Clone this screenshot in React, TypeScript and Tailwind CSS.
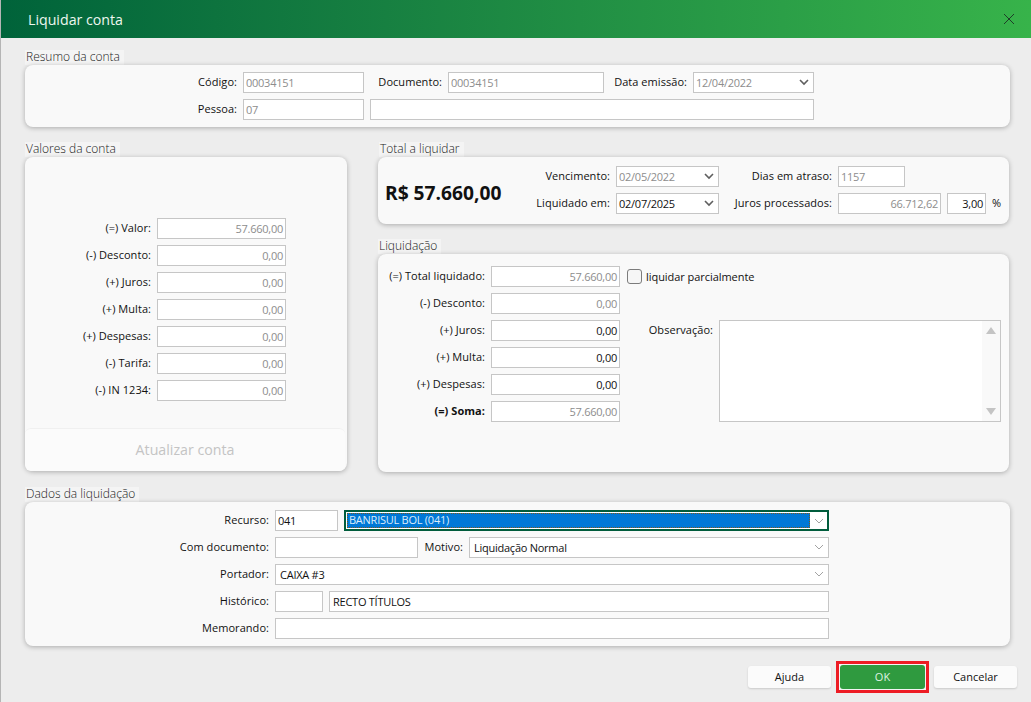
import type { ReactNode } from "react"

const ui = "font-['Open_Sans','Noto_Sans',sans-serif]"

const Chevron = ({ thin = false }: { thin?: boolean }) => (
  <svg width="12" height="8" viewBox="0 0 12 8" fill="none" className="shrink-0">
    {thin ? (
      <path d="M2 2 6 6 10 2" stroke="#a3a3a3" strokeWidth="1" />
    ) : (
      <path d="M2 2 6 6 10 2" stroke="#5f5f5f" strokeWidth="1.6" />
    )}
  </svg>
)

const Label = ({ children, className = "", bold = false }: { children: ReactNode; className?: string; bold?: boolean }) => (
  <div className={`shrink-0 pr-[6px] text-right text-[11px] leading-[20px] tracking-[0.05px] whitespace-nowrap text-[#111111] ${bold ? "font-bold" : "font-medium"} ${className}`}>
    {children}
  </div>
)

type BoxProps = {
  children?: ReactNode
  className?: string
  tone?: "gray" | "dark"
  right?: boolean
}

const Box = ({ children, className = "", tone = "gray", right = false }: BoxProps) => (
  <div
    className={`flex h-[21px] shrink-0 items-center border border-[#c6c6c6] bg-white px-[2px] pb-px text-[11px] leading-none tracking-[-0.25px] whitespace-nowrap ${
      tone === "gray" ? "text-[#8d8d8d]" : "text-[#111111]"
    } ${right ? "justify-end" : ""} ${className}`}
  >
    {children}
  </div>
)

const Select = ({ value, className = "", tone = "gray" }: { value: string; className?: string; tone?: "gray" | "dark" }) => (
  <Box tone={tone} className={`justify-between pr-[3px] ${className}`}>
    <span>{value}</span>
    <Chevron />
  </Box>
)

const Combo = ({ value, className = "" }: { value: string; className?: string }) => (
  <Box tone="dark" className={`justify-between pr-[3px] pl-[4px] tracking-[-0.15px] ${className}`}>
    <span>{value}</span>
    <Chevron thin />
  </Box>
)

type SectionProps = {
  title: string
  className?: string
  titleClass?: string
  panel?: string
  children: ReactNode
}

const Section = ({ title, className = "", titleClass = "", panel = "", children }: SectionProps) => (
  <section className={`flex flex-col ${className}`}>
    <div className={`h-[15px] self-start bg-[#f4f4f4] pr-[4px] pl-[1px] text-[12px] leading-[14px] font-light text-[#222222] ${titleClass}`}>{title}</div>
    <div className={`rounded-[8px] bg-[#f9f9f9] shadow-[0_1px_5px_rgba(0,0,0,0.28)] ${panel}`}>{children}</div>
  </section>
)

const accountRows = [
  ["(=) Valor:", "57.660,00"],
  ["(-) Desconto:", "0,00"],
  ["(+) Juros:", "0,00"],
  ["(+) Multa:", "0,00"],
  ["(+) Despesas:", "0,00"],
  ["(-) Tarifa:", "0,00"],
  ["(-) IN 1234:", "0,00"],
]

const settleRows: [string, string, boolean, boolean][] = [
  ["(=) Total liquidado:", "57.660,00", false, false],
  ["(-) Desconto:", "0,00", false, false],
  ["(+) Juros:", "0,00", true, false],
  ["(+) Multa:", "0,00", true, false],
  ["(+) Despesas:", "0,00", true, false],
  ["(=) Soma:", "57.660,00", false, true],
]

export default function App() {
  return (
    <div className={`flex h-[702px] w-[1031px] flex-col overflow-hidden border-l border-l-[#b5b5b5] bg-[#ededed] ${ui}`}>
      <header className="-ml-px flex h-[38px] shrink-0 items-center justify-between bg-gradient-to-r from-[#00633a] to-[#37b34a] pr-[16px] pl-[28px]">
        <h1 className="pt-px text-[14.2px] font-normal text-[#eef7f0]">Liquidar conta</h1>
        <svg width="12" height="12" viewBox="0 0 12 12" fill="none">
          <path d="M1 1 11 11M11 1 1 11" stroke="#1f3d28" strokeWidth="1" />
        </svg>
      </header>

      <main className="flex flex-1 flex-col pt-[12px] pr-[21px] pl-[24px]">
        <Section title="Resumo da conta" panel="h-[62px] pt-[7px]">
          <div className="flex">
            <Label className="w-[218px]">Código:</Label>
            <Box className="w-[121px]">00034151</Box>
            <Label className="w-[84px]">Documento:</Label>
            <Box className="w-[156px]">00034151</Box>
            <Label className="w-[89px]">Data emissão:</Label>
            <Select value="12/04/2022" className="w-[121px]" />
          </div>
          <div className="mt-[6px] flex">
            <Label className="w-[218px]">Pessoa:</Label>
            <Box className="w-[121px]">07</Box>
            <Box className="ml-[6px] w-[444px]" />
          </div>
        </Section>

        <div className="mt-[15px] flex gap-[31px]">
          <Section title="Valores da conta" className="w-[322px]" panel="flex h-[314px] flex-col pt-[61px]">
            <div className="flex flex-col gap-[6px]">
              {accountRows.map(([label, value]) => (
                <div key={label} className="flex">
                  <Label className="w-[132px]">{label}</Label>
                  <Box right className="w-[129px]">{value}</Box>
                </div>
              ))}
            </div>
            <button className="mt-auto mr-[2px] h-[43px] rounded-[6px] border-t border-[#f0f0f0] bg-[#fbfbfb] text-[14.2px] text-[#c4c4c4]">
              Atualizar conta
            </button>
          </Section>

          <div className="flex w-[631px] flex-col">
            <Section title="Total a liquidar" titleClass="ml-px" panel="flex h-[67px] pt-[9px]">
              <div className="w-[132px] pt-[14px] pl-[7px] text-[19.2px] leading-[26px] font-bold text-[#111111]">
                <span className="whitespace-nowrap">R$ 57.660,00</span>
              </div>
              <div className="flex flex-col gap-[6px]">
                <div className="flex">
                  <Label className="w-[106px]">Vencimento:</Label>
                  <Select value="02/05/2022" className="w-[103px]" />
                  <Label className="w-[119px]">Dias em atraso:</Label>
                  <Box className="w-[67px]">1157</Box>
                </div>
                <div className="flex">
                  <Label className="w-[106px]">Liquidado em:</Label>
                  <Select value="02/07/2025" tone="dark" className="w-[103px]" />
                  <Label className="w-[119px]">Juros processados:</Label>
                  <Box right className="w-[103px]">66.712,62</Box>
                  <Box right tone="dark" className="ml-[6px] w-[39px]">3,00</Box>
                  <span className="ml-[6px] text-[11px] leading-[20px] text-[#111111]">%</span>
                </div>
              </div>
            </Section>

            <Section title="Liquidação" className="mt-[15px]" panel="flex h-[218px] pt-[12px]">
              <div className="flex flex-col gap-[6px]">
                {settleRows.map(([label, value, dark, bold]) => (
                  <div key={label} className="flex">
                    <Label bold={bold} className="w-[113px]">{label}</Label>
                    <Box right tone={dark ? "dark" : "gray"} className="w-[129px]">{value}</Box>
                  </div>
                ))}
              </div>
              <div className="pl-[7px]">
                <div className="flex h-[21px] items-center gap-[4px]">
                  <span className="size-[15px] rounded-[3px] border border-[#7c7c7c] bg-[#f6f6f6]" />
                  <span className="pt-px text-[11px] font-medium tracking-[-0.05px] text-[#111111]">liquidar parcialmente</span>
                </div>
                <div className="mt-[33px] flex">
                  <Label className="w-[92px]">Observação:</Label>
                  <div className="flex h-[102px] w-[282px] border border-[#c6c6c6] bg-white">
                    <div className="flex-1" />
                    <div className="flex w-[18px] flex-col items-center justify-between bg-[#f9f9f9] py-[6px]">
                      <svg width="10" height="7" viewBox="0 0 10 7"><path d="M5 0 10 7H0Z" fill="#c4c4c4" /></svg>
                      <svg width="10" height="7" viewBox="0 0 10 7"><path d="M0 0H10L5 7Z" fill="#c4c4c4" /></svg>
                    </div>
                  </div>
                </div>
              </div>
            </Section>
          </div>
        </div>

        <Section title="Dados da liquidação" className="mt-[15px]" panel="flex h-[144px] flex-col gap-[6px] pt-[8px]">
          <div className="flex">
            <Label className="w-[250px]">Recurso:</Label>
            <Box tone="dark" className="w-[63px]">041</Box>
            <div className="ml-[6px] flex h-[21px] w-[485px] items-center justify-between border-2 border-[#005c3c] bg-white pr-[2px] pl-px">
              <div className="flex h-[15px] w-[463px] items-center border border-dotted border-[#7a5a1e] bg-[#0078d7] pl-px text-[11px] tracking-[-0.25px] text-[#dcecfa]">
                BANRISUL BOL (041)
              </div>
              <Chevron thin />
            </div>
          </div>
          <div className="flex">
            <Label className="w-[250px]">Com documento:</Label>
            <Box className="w-[143px]" />
            <Label className="w-[51px]">Motivo:</Label>
            <Combo value="Liquidação Normal" className="w-[360px]" />
          </div>
          <div className="flex">
            <Label className="w-[250px]">Portador:</Label>
            <Combo value="CAIXA #3" className="w-[554px]" />
          </div>
          <div className="flex">
            <Label className="w-[250px]">Histórico:</Label>
            <Box className="w-[48px]" />
            <Box tone="dark" className="ml-[6px] w-[500px] pl-[3px]">RECTO TÍTULOS</Box>
          </div>
          <div className="flex">
            <Label className="w-[250px]">Memorando:</Label>
            <Box className="w-[554px]" />
          </div>
        </Section>

        <footer className="mt-[15px] -mr-[7px] flex items-center justify-end">
          <button className="h-[22px] w-[83px] rounded-[3px] bg-[#fbfbfb] text-[11px] font-medium text-[#111111] shadow-[0_1px_2px_rgba(0,0,0,0.15)]">
            Ajuda
          </button>
          <div className="ml-[5px] border-[3px] border-[#ed1c24] bg-[#f4f4f4] p-px">
            <button className="block h-[24px] w-[85px] rounded-[3px] bg-[#2f9a3f] text-[11px] font-medium text-[#dff2e2]">
              OK
            </button>
          </div>
          <button className="ml-[5px] h-[22px] w-[83px] rounded-[3px] bg-[#fbfbfb] text-[11px] font-medium text-[#111111] shadow-[0_1px_2px_rgba(0,0,0,0.15)]">
            Cancelar
          </button>
        </footer>
      </main>
    </div>
  )
}
